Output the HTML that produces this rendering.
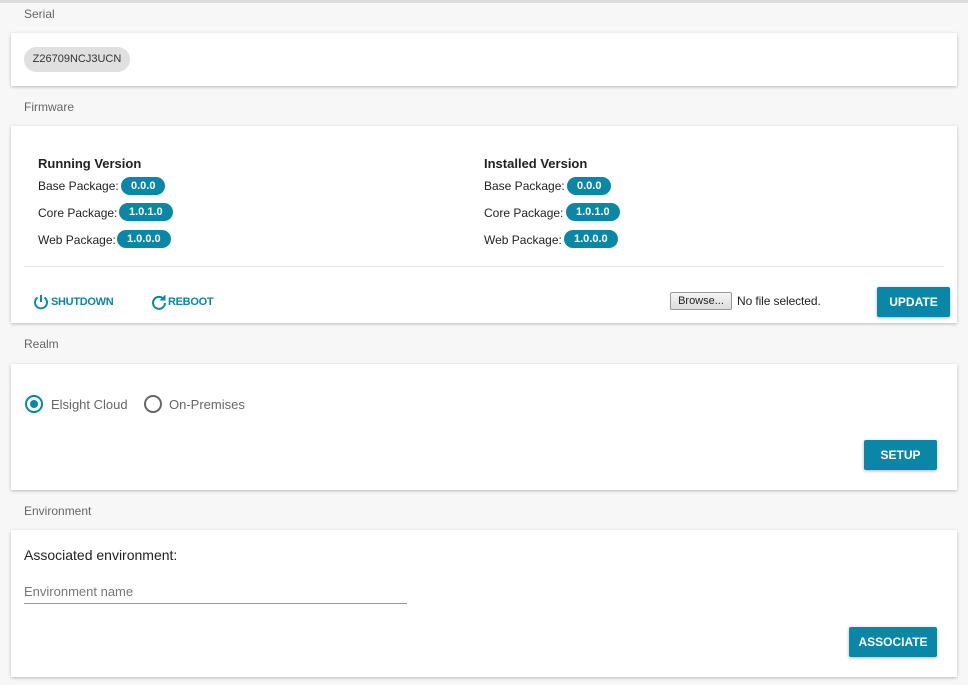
<!DOCTYPE html><html><head><style>
body{margin:0;width:968px;height:685px;background:#f7f7f7;font-family:"Liberation Sans",sans-serif;position:relative;overflow:hidden}
.a{position:absolute}
.card{position:absolute;left:11px;width:946px;background:#fff;box-shadow:0 1px 3px rgba(0,0,0,.25)}
.lbl{position:absolute;left:24px;font-size:12px;color:#666}
.pill{position:absolute;background:#0a86a6;color:#fff;font-size:11px;font-weight:bold;border-radius:10px;height:18px;line-height:18px;padding:0 10px}
.t{position:absolute;font-size:12px;color:#222}
.btn{position:absolute;background:#0a86a6;color:#fff;font-size:12px;font-weight:bold;text-align:center;border-radius:2px;box-shadow:0 1px 3px rgba(0,0,0,.3)}
.tb{position:absolute;color:#0a86a6;font-size:11px;font-weight:bold}
</style></head><body>
<div class="a" style="left:0;top:0;width:968px;height:3px;background:#ddd"></div>
<div class="lbl" style="top:7px">Serial</div>
<div class="card" style="top:33px;height:53px">
<div class="a" style="left:13px;top:14px;width:106px;height:25px;border-radius:13px;background:#e0e0e0;font-size:11px;color:#333;line-height:25px;text-align:center">Z26709NCJ3UCN</div></div>
<div class="lbl" style="top:100px">Firmware</div>
<div class="card" style="top:126px;height:197px"></div>
<div class="t" style="left:38px;top:156px;font-size:13px;font-weight:bold">Running Version</div>
<div class="t" style="left:38px;top:179px">Base Package:</div><div class="pill" style="left:121px;top:177px">0.0.0</div>
<div class="t" style="left:38px;top:206px">Core Package:</div><div class="pill" style="left:119px;top:203px">1.0.1.0</div>
<div class="t" style="left:38px;top:233px">Web Package:</div><div class="pill" style="left:117px;top:230px">1.0.0.0</div>
<div class="t" style="left:484px;top:156px;font-size:13px;font-weight:bold">Installed Version</div>
<div class="t" style="left:484px;top:179px">Base Package:</div><div class="pill" style="left:567px;top:177px">0.0.0</div>
<div class="t" style="left:484px;top:206px">Core Package:</div><div class="pill" style="left:566px;top:203px">1.0.1.0</div>
<div class="t" style="left:484px;top:233px">Web Package:</div><div class="pill" style="left:564px;top:230px">1.0.0.0</div>
<div class="a" style="left:24px;top:266px;width:920px;height:1px;background:#e4e4e4"></div>
<svg class="a" style="left:33px;top:294px" width="16" height="16" viewBox="0 0 16 16" fill="none" stroke="#0a86a6" stroke-width="2"><path d="M8 1v7"/><path d="M4.5 3.5a6 6 0 1 0 7 0"/></svg>
<div class="tb" style="left:51px;top:296px;letter-spacing:-0.3px">SHUTDOWN</div>
<svg class="a" style="left:151px;top:294px" width="16" height="16" viewBox="0 0 16 16" fill="none" stroke="#0a86a6" stroke-width="2"><path d="M13 5.5A6 6 0 1 0 14 9"/><path d="M14 1v5h-5" fill="#0a86a6" stroke-width="1"/></svg>
<div class="tb" style="left:168px;top:296px;letter-spacing:-0.3px">REBOOT</div>
<div class="a" style="left:670px;top:292px;width:60px;height:16px;border:1px solid #999;border-radius:2px;background:linear-gradient(#f4f4f4,#ddd);font-size:11px;line-height:16px;text-align:center;color:#222">Browse...</div>
<div class="t" style="left:737px;top:294px;letter-spacing:-0.1px">No file selected.</div>
<div class="btn" style="left:877px;top:287px;width:73px;height:30px;line-height:30px">UPDATE</div>
<div class="lbl" style="top:337px">Realm</div>
<div class="card" style="top:364px;height:126px"></div>
<div class="a" style="left:25px;top:395px;width:14px;height:14px;border:2px solid #0a86a6;border-radius:50%"></div>
<div class="a" style="left:30px;top:400px;width:8px;height:8px;background:#0a86a6;border-radius:50%"></div>
<div class="t" style="left:51px;top:397px;font-size:13px;color:#666">Elsight Cloud</div>
<div class="a" style="left:144px;top:395px;width:14px;height:14px;border:2px solid #666;border-radius:50%"></div>
<div class="t" style="left:169px;top:397px;font-size:13px;color:#666">On-Premises</div>
<div class="btn" style="left:864px;top:440px;width:73px;height:30px;line-height:30px">SETUP</div>
<div class="lbl" style="top:504px">Environment</div>
<div class="card" style="top:530px;height:147px"></div>
<div class="t" style="left:24px;top:547px;font-size:14px">Associated environment:</div>
<div class="t" style="left:24px;top:584px;font-size:13px;color:#777">Environment name</div>
<div class="a" style="left:24px;top:603px;width:383px;height:1px;background:#999"></div>
<div class="btn" style="left:849px;top:627px;width:88px;height:30px;line-height:30px">ASSOCIATE</div>
</body></html>
